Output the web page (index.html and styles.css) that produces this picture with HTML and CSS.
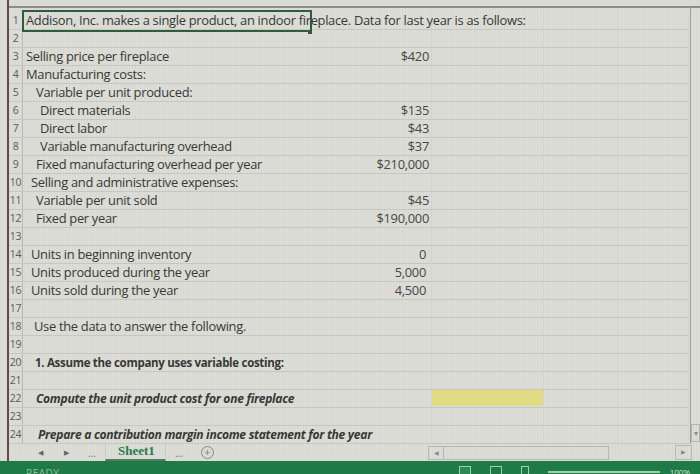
FILE: index.html
```html
<!DOCTYPE html>
<html lang="en">
<head>
    <meta charset="UTF-8">
    <title>Addison, Inc. - Sheet1</title>
    <link rel="stylesheet" href="styles.css">
</head>
<body>

    <div class="app">
        <div class="frame-top"></div>

        <div class="sheet-area">
            <div class="grid">
                <div class="row"><span class="num">1</span><span class="cell a selected">Addison, Inc. makes a single product, an indoor fireplace. Data for last year is as follows:</span><span class="cell b"></span><span class="cell c"></span><span class="cell d"></span><span class="cell e"></span></div>
                <div class="row"><span class="num">2</span><span class="cell a"></span><span class="cell b"></span><span class="cell c"></span><span class="cell d"></span><span class="cell e"></span></div>
                <div class="row"><span class="num">3</span><span class="cell a">Selling price per fireplace</span><span class="cell b">$420</span><span class="cell c"></span><span class="cell d"></span><span class="cell e"></span></div>
                <div class="row"><span class="num">4</span><span class="cell a">Manufacturing costs:</span><span class="cell b"></span><span class="cell c"></span><span class="cell d"></span><span class="cell e"></span></div>
                <div class="row"><span class="num">5</span><span class="cell a indent1">Variable per unit produced:</span><span class="cell b"></span><span class="cell c"></span><span class="cell d"></span><span class="cell e"></span></div>
                <div class="row"><span class="num">6</span><span class="cell a indent2">Direct materials</span><span class="cell b">$135</span><span class="cell c"></span><span class="cell d"></span><span class="cell e"></span></div>
                <div class="row"><span class="num">7</span><span class="cell a indent2">Direct labor</span><span class="cell b">$43</span><span class="cell c"></span><span class="cell d"></span><span class="cell e"></span></div>
                <div class="row"><span class="num">8</span><span class="cell a indent2">Variable manufacturing overhead</span><span class="cell b">$37</span><span class="cell c"></span><span class="cell d"></span><span class="cell e"></span></div>
                <div class="row"><span class="num">9</span><span class="cell a indent1">Fixed manufacturing overhead per year</span><span class="cell b">$210,000</span><span class="cell c"></span><span class="cell d"></span><span class="cell e"></span></div>
                <div class="row"><span class="num">10</span><span class="cell a">Selling and administrative expenses:</span><span class="cell b"></span><span class="cell c"></span><span class="cell d"></span><span class="cell e"></span></div>
                <div class="row"><span class="num">11</span><span class="cell a indent1">Variable per unit sold</span><span class="cell b">$45</span><span class="cell c"></span><span class="cell d"></span><span class="cell e"></span></div>
                <div class="row"><span class="num">12</span><span class="cell a indent1">Fixed per year</span><span class="cell b">$190,000</span><span class="cell c"></span><span class="cell d"></span><span class="cell e"></span></div>
                <div class="row"><span class="num">13</span><span class="cell a"></span><span class="cell b"></span><span class="cell c"></span><span class="cell d"></span><span class="cell e"></span></div>
                <div class="row"><span class="num">14</span><span class="cell a">Units in beginning inventory</span><span class="cell b">0</span><span class="cell c"></span><span class="cell d"></span><span class="cell e"></span></div>
                <div class="row"><span class="num">15</span><span class="cell a">Units produced during the year</span><span class="cell b">5,000</span><span class="cell c"></span><span class="cell d"></span><span class="cell e"></span></div>
                <div class="row"><span class="num">16</span><span class="cell a">Units sold during the year</span><span class="cell b">4,500</span><span class="cell c"></span><span class="cell d"></span><span class="cell e"></span></div>
                <div class="row"><span class="num">17</span><span class="cell a"></span><span class="cell b"></span><span class="cell c"></span><span class="cell d"></span><span class="cell e"></span></div>
                <div class="row"><span class="num">18</span><span class="cell a">Use the data to answer the following.</span><span class="cell b"></span><span class="cell c"></span><span class="cell d"></span><span class="cell e"></span></div>
                <div class="row"><span class="num">19</span><span class="cell a"></span><span class="cell b"></span><span class="cell c"></span><span class="cell d"></span><span class="cell e"></span></div>
                <div class="row"><span class="num">20</span><span class="cell a bold">1. Assume the company uses variable costing:</span><span class="cell b"></span><span class="cell c"></span><span class="cell d"></span><span class="cell e"></span></div>
                <div class="row"><span class="num">21</span><span class="cell a"></span><span class="cell b"></span><span class="cell c"></span><span class="cell d"></span><span class="cell e"></span></div>
                <div class="row"><span class="num">22</span><span class="cell a bold italic">Compute the unit product cost for one fireplace</span><span class="cell b"></span><span class="cell c answer"></span><span class="cell d"></span><span class="cell e"></span></div>
                <div class="row"><span class="num">23</span><span class="cell a"></span><span class="cell b"></span><span class="cell c"></span><span class="cell d"></span><span class="cell e"></span></div>
                <div class="row"><span class="num">24</span><span class="cell a bold italic">Prepare a contribution margin income statement for the year</span><span class="cell b"></span><span class="cell c"></span><span class="cell d"></span><span class="cell e"></span></div>
            </div>

            <div class="vscroll">
                <div class="vscroll-down">&#9662;</div>
            </div>
        </div>

        <div class="tabbar">
            <div class="tabs">
                <span class="tab-nav">&#9664;</span>
                <span class="tab-nav">&#9654;</span>
                <span class="tab-more">...</span>
                <span class="tab active">Sheet1</span>
                <span class="tab-more">...</span>
                <span class="tab-add">+</span>
            </div>
            <div class="hscroll">
                <div class="hscroll-track"><span class="hscroll-btn">&#9664;</span></div>
                <span class="hscroll-btn right">&#9654;</span>
            </div>
        </div>

        <div class="statusbar">
            <span class="status-text">READY</span>
            <div class="status-right">
                <span class="view-icon"></span>
                <span class="view-icon"></span>
                <span class="view-icon narrow"></span>
                <span class="zoom-slider"></span>
                <span class="zoom-text">100%</span>
            </div>
        </div>
    </div>

</body>
</html>
```

FILE: styles.css
```css
body {
    margin: 0;
    background-color: #dcddd6;
    font-family: 'Open Sans', 'Liberation Sans', sans-serif;
    color: #383836;
    overflow: hidden;
}
.app {
    width: 700px;
    height: 474px;
    display: flex;
    flex-direction: column;
    background-image: repeating-linear-gradient(90deg, rgba(0, 0, 0, 0.025) 0 1px, transparent 1px 3px);
}
.frame-top {
    height: 6px;
    border-bottom: 2px solid #8d8c87;
    margin-left: 8px;
}
.sheet-area {
    display: flex;
}
.grid {
    margin-left: 7px;
    border-left: 2px solid #5e4d4a;
    margin-top: -8px;
    padding-top: 12px;
}
.row {
    display: grid;
    grid-template-columns: 14px 288px 121px 112px 74px 71px;
    height: 18px;
    box-sizing: border-box;
    border-bottom: 1px solid #c6c7c0;
}
.num {
    font-size: 10.5px;
    line-height: 17px;
    text-align: center;
    color: #5a5a58;
    border-right: 1px solid #b9bab3;
    letter-spacing: -0.3px;
}
.cell {
    font-size: 12.9px;
    line-height: 17px;
    white-space: nowrap;
    letter-spacing: -0.3px;
    padding: 0 3px;
    border-right: 1px solid #d3d4cd;
    min-width: 0;
}
.a {
    overflow: visible;
    border-right-color: transparent;
    position: relative;
    z-index: 1;
}
.row:nth-child(n+10) .a {
    padding-left: 8px;
}
.row:nth-child(n+17) .a {
    padding-left: 11px;
}
.indent1,
.row:nth-child(n+10) .indent1 {
    padding-left: 13px;
}
.indent2 {
    padding-left: 17px;
}
.b {
    text-align: right;
    color: #474745;
    padding-right: 2px;
}
.row:nth-child(n+13) .b {
    padding-right: 5px;
}
.row:nth-child(n+10) .bold {
    font-weight: bold;
    font-size: 11.5px;
    padding-left: 12px;
}
.row:nth-child(n+22) .bold {
    padding-left: 13px;
    font-size: 12.1px;
}
.row:nth-child(n+24) .bold {
    padding-left: 15px;
}
.italic {
    font-style: italic;
}
.selected {
    outline: 2px solid #2f5c3b;
    outline-offset: -1px;
    margin-top: -1px;
    height: 20px;
    line-height: 19px;
}
.selected::after {
    content: '';
    position: absolute;
    right: -2px;
    bottom: -3px;
    width: 4px;
    height: 4px;
    background: #2f5c3b;
}
.answer {
    background-color: #e1dc84;
    margin: 0 0 1px 0;
}
.vscroll {
    width: 9px;
    border-left: 1px solid #9c9b96;
    margin-top: -2px;
    margin-left: 1px;
    display: flex;
    flex-direction: column;
    justify-content: flex-end;
}
.vscroll-down {
    height: 16px;
    border: 1px solid #b4b4ae;
    font-size: 8px;
    color: #8a8a86;
    text-align: center;
    line-height: 16px;
    margin-bottom: 2px;
}
.tabbar {
    height: 17px;
    display: flex;
    align-items: center;
    justify-content: space-between;
    padding-left: 8px;
    border-left: 2px solid #5e4d4a;
    margin-left: 7px;
}
.tabs {
    display: flex;
    align-items: center;
    height: 17px;
}
.tab-nav {
    font-size: 7px;
    color: #5a6e5c;
    width: 26px;
    text-align: center;
}
.tab-nav:first-child {
    margin-left: 10px;
}
.tab-more {
    font-size: 10px;
    color: #777;
    width: 26px;
    text-align: center;
    line-height: 10px;
}
.tab {
    font-family: 'Liberation Serif', serif;
    font-weight: bold;
    font-size: 13px;
    color: #2b7a4b;
    padding: 0 10px 0 12px;
    height: 17px;
    line-height: 14px;
    border-bottom: 2px solid #4f7d5e;
    border-left: 1px solid #c9c9c2;
    border-right: 1px solid #c9c9c2;
    box-sizing: border-box;
}
.tab-add {
    width: 11px;
    height: 11px;
    border: 1px solid #8b8b87;
    border-radius: 50%;
    font-size: 11px;
    line-height: 10px;
    text-align: center;
    color: #777;
    margin-left: 9px;
}
.hscroll {
    display: flex;
    align-items: center;
    width: 264px;
    justify-content: space-between;
    margin-right: 8px;
}
.hscroll-track {
    width: 181px;
    height: 14px;
    border: 1px solid #b8b8b2;
    box-sizing: border-box;
    display: flex;
}
.hscroll-btn {
    width: 16px;
    height: 14px;
    border: 1px solid #b8b8b2;
    box-sizing: border-box;
    font-size: 6px;
    color: #888;
    text-align: center;
    line-height: 12px;
    margin: -1px 0 0 -1px;
}
.hscroll-btn.right {
    margin: 0;
    width: 17px;
    height: 15px;
}
.statusbar {
    height: 13px;
    background-color: #1e7a47;
    display: flex;
    justify-content: space-between;
    overflow: hidden;
}
.status-text {
    font-size: 10px;
    color: #8fbf9e;
    padding-left: 26px;
    margin-top: 5px;
    letter-spacing: 0.5px;
}
.status-right {
    display: flex;
    align-items: flex-start;
    padding-top: 5px;
}
.view-icon {
    width: 12px;
    height: 10px;
    border: 1px solid #9fcfae;
    margin-right: 19px;
    box-sizing: border-box;
}
.view-icon:first-child {
    background-color: #2a8a55;
}
.view-icon.narrow {
    width: 8px;
}
.zoom-slider {
    width: 112px;
    height: 2px;
    margin-top: 5px;
    background-color: #9fcfae;
    margin-right: 10px;
}
.zoom-text {
    font-size: 8px;
    color: #cde5d5;
    margin-right: 10px;
}
```
